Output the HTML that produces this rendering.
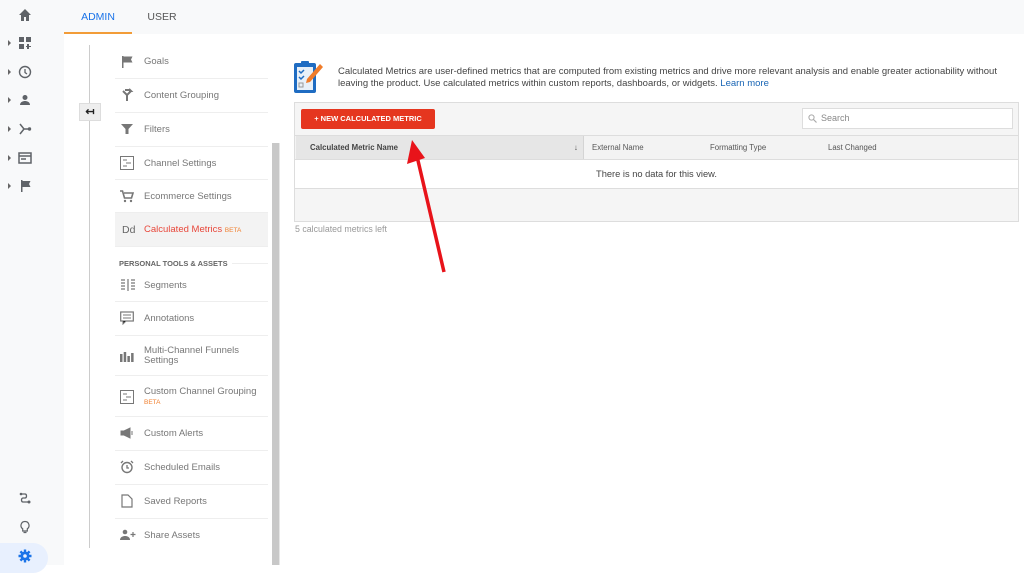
<!DOCTYPE html>
<html><head><meta charset="utf-8"><style>
*{margin:0;padding:0;box-sizing:border-box}
body{width:1024px;height:565px;overflow:hidden;background:#fff;font-family:"Liberation Sans",sans-serif;position:relative;color:#666}
.abs{position:absolute}
.nav{left:0;top:0;width:64px;height:565px;background:#f8f9fa}
.top{left:64px;top:0;width:960px;height:34px;background:#f8f9fa}
.ni{position:absolute;left:18px;width:14px;height:14px}
.car{position:absolute;left:8px;width:0;height:0;border-top:3px solid transparent;border-bottom:3px solid transparent;border-left:3px solid #666}
.item{position:absolute;left:115px;width:153px;border-bottom:1px solid #eee;font-size:9.5px;color:#777}
.item .t{position:absolute;left:29px}
.item svg{position:absolute;left:5px}
</style></head><body>
<div class="abs nav"></div>
<div class="abs top"></div>
<svg class="ni" style="top:8px" viewBox="0 0 14 14"><path d="M7 1L1 7h2v6h3V9h2v4h3V7h2z" fill="#5f6368"/></svg>
<div class="car" style="top:40px"></div><svg class="ni" style="top:36px" viewBox="0 0 14 14"><path d="M1 1h5v5H1zM8 1h5v5H8zM1 8h5v5H1zM9 8h2v2h2v1h-2v2H9v-2H8v-1h1z" fill="#5f6368"/></svg>
<div class="car" style="top:69px"></div><svg class="ni" style="top:65px" viewBox="0 0 14 14"><circle cx="7" cy="7" r="5.5" fill="none" stroke="#5f6368" stroke-width="1.4"/><path d="M7 4v3.5l2 1.5" stroke="#5f6368" stroke-width="1.3" fill="none"/></svg>
<div class="car" style="top:97px"></div><svg class="ni" style="top:93px" viewBox="0 0 14 14"><circle cx="7" cy="4.5" r="2.5" fill="#5f6368"/><path d="M2 12c0-3 3-4 5-4s5 1 5 4z" fill="#5f6368"/></svg>
<div class="car" style="top:126px"></div><svg class="ni" style="top:122px" viewBox="0 0 14 14"><path d="M2 2l4 5-4 5M6 7h5" stroke="#5f6368" stroke-width="1.5" fill="none"/><circle cx="11.5" cy="7" r="1.7" fill="#5f6368"/></svg>
<div class="car" style="top:155px"></div><svg class="ni" style="top:151px" viewBox="0 0 14 14"><rect x="1" y="2" width="12" height="10" fill="none" stroke="#5f6368" stroke-width="1.5"/><path d="M1 5h12M3 8h5" stroke="#5f6368" stroke-width="1.5"/></svg>
<div class="car" style="top:183px"></div><svg class="ni" style="top:179px" viewBox="0 0 14 14"><path d="M3 1h1.5v12H3zM4.5 2h8l-1.5 3 1.5 3h-8z" fill="#5f6368"/></svg>
<svg class="ni" style="top:492px" viewBox="0 0 14 14"><path d="M3 2h4c2 0 2 4 0 4H5c-2 0-2 4 0 4h5" stroke="#5f6368" stroke-width="1.3" fill="none"/><circle cx="3" cy="2" r="1.3" fill="#5f6368"/><circle cx="11" cy="10" r="1.5" fill="#5f6368"/></svg>
<svg class="ni" style="top:520px" viewBox="0 0 14 14"><path d="M7 1.5a4 4 0 0 0-2.3 7.3V11h4.6V8.8A4 4 0 0 0 7 1.5zM5.5 12.5h3" stroke="#5f6368" stroke-width="1.2" fill="none"/></svg>
<div class="abs" style="left:0;top:543px;width:48px;height:30px;background:#e8f0fe;border-radius:0 15px 15px 0"></div>
<svg class="ni" style="top:549px" viewBox="0 0 14 14"><circle cx="7" cy="7" r="4.5" fill="#1a73e8"/><path d="M7 0.5v13M0.5 7h13M2.4 2.4l9.2 9.2M11.6 2.4l-9.2 9.2" stroke="#1a73e8" stroke-width="2.4"/><circle cx="7" cy="7" r="1.8" fill="#e8f0fe"/></svg>
<div class="abs" style="left:64px;top:0;width:68px;height:34px;border-bottom:2px solid #f29c38;color:#1a73e8;font-size:10.5px;text-align:center;line-height:34px">ADMIN</div>
<div class="abs" style="left:138px;top:0;width:48px;height:34px;color:#555;font-size:10.5px;text-align:center;line-height:34px">USER</div>
<div class="abs" style="left:89px;top:45px;width:1px;height:503px;background:#ccc"></div>
<div class="abs" style="left:79px;top:103px;width:22px;height:18px;background:#eee;border:1px solid #ddd;font-size:11px;color:#222;text-align:center;line-height:16px;font-weight:bold">↤</div>
<div class="abs" style="left:272px;top:143px;width:7px;height:422px;background:#c8c8c8"></div>
<div class="abs" style="left:279px;top:143px;width:1px;height:422px;background:#e6e6e6"></div>

<div class="item" style="top:45px;height:34px"><svg width="14" height="14" style="top:10px" viewBox="0 0 14 14"><path d="M2 1h1.5v12H2zM3.5 1.5h9l-1.5 3 1.5 3h-9z" fill="#777"/></svg><span class="t" style="top:11px">Goals</span></div>
<div class="item" style="top:79px;height:34px"><svg width="14" height="14" style="top:9px" viewBox="0 0 14 14"><path d="M7 13V7L3 3M7 7l4-4M5 2h4M9 1l2 2-2 0" stroke="#777" stroke-width="2" fill="none"/></svg><span class="t" style="top:11px">Content Grouping</span></div>
<div class="item" style="top:113px;height:34px"><svg width="14" height="14" style="top:9px" viewBox="0 0 14 14"><path d="M1 2h12L8.5 7v5h-3V7z" fill="#777"/></svg><span class="t" style="top:11px">Filters</span></div>
<div class="item" style="top:147px;height:33px"><svg width="14" height="14" style="top:9px" viewBox="0 0 14 14"><rect x="0.5" y="0.5" width="13" height="13" fill="none" stroke="#777"/><path d="M3 4h4M6 7h5M3 10h4" stroke="#777"/></svg><span class="t" style="top:11px">Channel Settings</span></div>
<div class="item" style="top:180px;height:33px"><svg width="14" height="14" style="top:9px" viewBox="0 0 14 14"><path d="M0 2h2.5l2 7h7l1.5-5H4" stroke="#777" stroke-width="1.6" fill="none"/><circle cx="5" cy="12" r="1.2" fill="#777"/><circle cx="11" cy="12" r="1.2" fill="#777"/></svg><span class="t" style="top:11px">Ecommerce Settings</span></div>
<div class="item" style="top:213px;height:34px;background:#f3f3f3"><span style="position:absolute;left:7px;top:11px;font-size:10.5px;color:#666">Dd</span><span class="t" style="top:11px;color:#e8473a">Calculated Metrics <span style="font-size:6.5px;color:#f08030">BETA</span></span></div>
<div class="abs" style="left:119px;top:259px;font-size:7.5px;color:#666;font-weight:bold">PERSONAL TOOLS &amp; ASSETS</div>
<div class="abs" style="left:232px;top:263px;width:36px;height:1px;background:#eee"></div>
<div class="item" style="top:268px;height:34px"><svg width="16" height="14" style="top:10px;left:5px" viewBox="0 0 16 14"><path d="M1 2h4M1 5h4M1 8h4M1 11h4M11 2h4M11 5h4M11 8h4M11 11h4M8 1v12" stroke="#777" stroke-width="1.2"/></svg><span class="t" style="top:12px">Segments</span></div>
<div class="item" style="top:302px;height:34px"><svg width="14" height="14" style="top:9px" viewBox="0 0 14 14"><rect x="0.7" y="1" width="12.6" height="9" fill="none" stroke="#777" stroke-width="1.2"/><path d="M3 10v3l3-3M3 4h8M3 7h8" stroke="#777"/></svg><span class="t" style="top:11px">Annotations</span></div>
<div class="item" style="top:336px;height:40px"><svg width="14" height="14" style="top:13px" viewBox="0 0 14 14"><path d="M0 5h2.5v8H0zM3.7 3h2.5v10H3.7zM7.4 7h2.5v6H7.4zM11.1 4h2.5v9h-2.5z" fill="#777"/></svg><span class="t" style="top:10px;line-height:10px">Multi-Channel Funnels<br>Settings</span></div>
<div class="item" style="top:376px;height:41px"><svg width="14" height="14" style="top:14px" viewBox="0 0 14 14"><rect x="0.5" y="0.5" width="13" height="13" fill="none" stroke="#777"/><path d="M3 4h4M6 7h5M3 10h4" stroke="#777"/></svg><span class="t" style="top:10px">Custom Channel Grouping</span><span class="t" style="top:23px;font-size:6.5px;color:#f08030">BETA</span></div>
<div class="item" style="top:417px;height:34px"><svg width="14" height="14" style="top:9px" viewBox="0 0 14 14"><path d="M1 5h3l6-3v10L4 9H1zM12 5v4" stroke="#777" fill="#777"/></svg><span class="t" style="top:11px">Custom Alerts</span></div>
<div class="item" style="top:451px;height:34px"><svg width="14" height="14" style="top:9px" viewBox="0 0 14 14"><circle cx="7" cy="7.5" r="5" fill="none" stroke="#777" stroke-width="1.4"/><path d="M1 3l2-2M13 3l-2-2M7 5v3h2" stroke="#777" stroke-width="1.3" fill="none"/></svg><span class="t" style="top:11px">Scheduled Emails</span></div>
<div class="item" style="top:485px;height:34px"><svg width="14" height="14" style="top:9px" viewBox="0 0 14 14"><path d="M2 1h6l4 4v8H2z" fill="none" stroke="#777" stroke-width="1.2"/></svg><span class="t" style="top:11px">Saved Reports</span></div>
<div class="item" style="top:519px;height:34px;border:none"><svg width="16" height="14" style="top:9px" viewBox="0 0 16 14"><circle cx="5" cy="4" r="2.3" fill="#777"/><path d="M0 12c0-3 3-4 5-4s5 1 5 4z" fill="#777"/><path d="M13 4v5M10.5 6.5h5" stroke="#777" stroke-width="1.2"/></svg><span class="t" style="top:11px">Share Assets</span></div>

<svg class="abs" style="left:293px;top:60px" width="30" height="34" viewBox="0 0 30 34"><rect x="1" y="3" width="22" height="30" rx="2" fill="#1f6cc2"/><rect x="4" y="7" width="16" height="23" fill="#e8f0f8"/><rect x="8" y="1" width="8" height="5" rx="1" fill="#1f6cc2"/><path d="M6 11l2 2 3-3M6 17l2 2 3-3" stroke="#1f6cc2" stroke-width="1.5" fill="none"/><rect x="6" y="23" width="4" height="4" fill="none" stroke="#999"/><path d="M27 4l3 3-13 15-4 1 1-4z" fill="#f07c2a"/></svg>
<div class="abs" style="left:338px;top:66px;font-size:9.5px;line-height:11.5px;color:#444;width:668px">Calculated Metrics are user-defined metrics that are computed from existing metrics and drive more relevant analysis and enable greater actionability without leaving the product. Use calculated metrics within custom reports, dashboards, or widgets. <span style="color:#1a66b5">Learn more</span></div>
<div class="abs" style="left:294px;top:102px;width:725px;height:120px;background:#f5f5f5;border:1px solid #ddd"></div>
<div class="abs" style="left:301px;top:109px;width:134px;height:20px;background:#e5361f;border-radius:2px;color:#fff;font-size:7.5px;font-weight:bold;text-align:center;line-height:20px">+ NEW CALCULATED METRIC</div>
<div class="abs" style="left:802px;top:108px;width:211px;height:21px;background:#fff;border:1px solid #ddd;font-size:9px;color:#888;line-height:19px;padding-left:18px">Search</div>
<svg class="abs" style="left:808px;top:114px" width="9" height="9" viewBox="0 0 9 9"><circle cx="3.5" cy="3.5" r="2.6" fill="none" stroke="#aaa"/><path d="M5.5 5.5L8.5 8.5" stroke="#aaa" stroke-width="1.2"/></svg>
<div class="abs" style="left:295px;top:135px;width:723px;height:25px;background:#f3f3f3;border-top:1px solid #ddd;border-bottom:1px solid #ddd"></div>
<div class="abs" style="left:296px;top:136px;width:288px;height:23px;background:#e6e6e6;border-right:1px solid #d4d4d4;font-size:7.8px;font-weight:bold;color:#444;line-height:23px;padding-left:14px">Calculated Metric Name<span style="position:absolute;right:5px">↓</span></div>
<div class="abs" style="left:592px;top:136px;font-size:7.8px;color:#555;line-height:23px">External Name</div>
<div class="abs" style="left:710px;top:136px;font-size:7.8px;color:#555;line-height:23px">Formatting Type</div>
<div class="abs" style="left:828px;top:136px;font-size:7.8px;color:#555;line-height:23px">Last Changed</div>
<div class="abs" style="left:295px;top:160px;width:723px;height:29px;background:#fff;border-bottom:1px solid #ddd;font-size:9.3px;color:#444;text-align:center;line-height:28px">There is no data for this view.</div>
<div class="abs" style="left:295px;top:224px;font-size:8.8px;color:#999">5 calculated metrics left</div>
<svg class="abs" style="left:395px;top:130px" width="60" height="150" viewBox="0 0 60 150"><path d="M49 142L21 22" stroke="#e8131a" stroke-width="3.5" fill="none"/><path d="M17 10L12 34L30 28z" fill="#e8131a"/></svg>
</body></html>
